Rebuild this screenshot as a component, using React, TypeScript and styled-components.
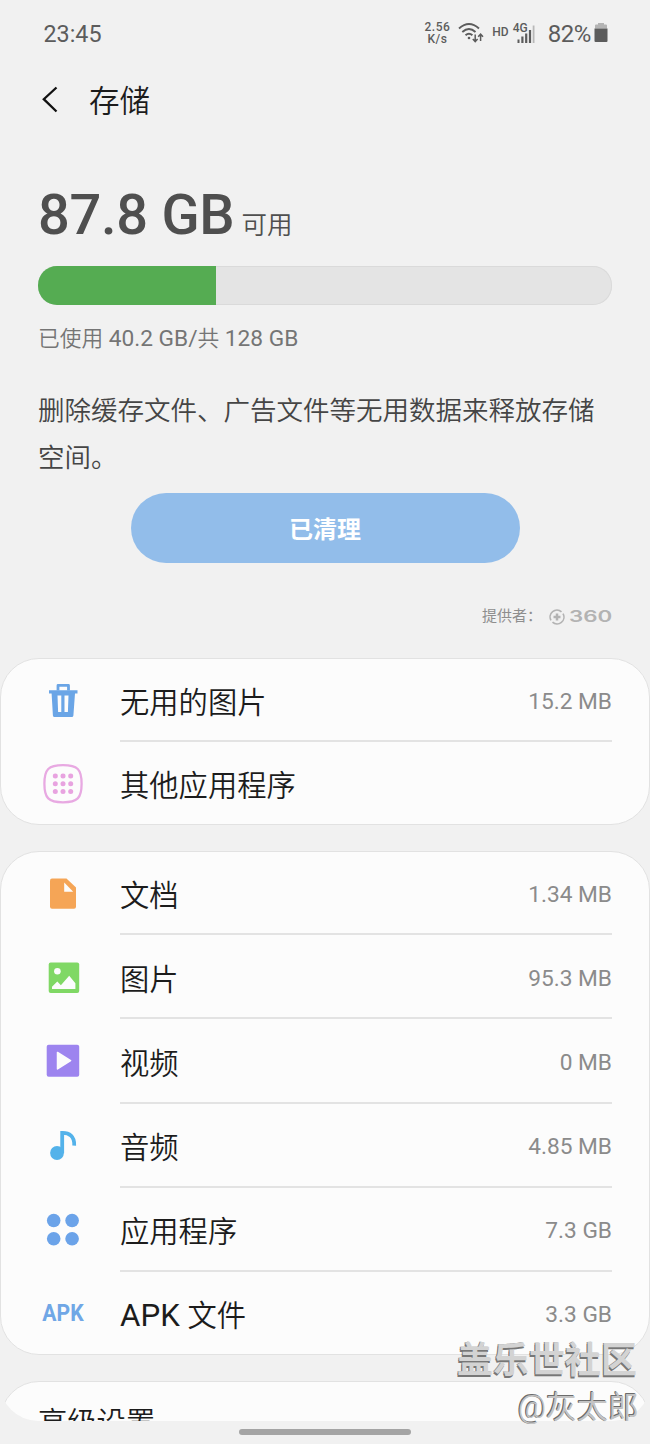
import React from 'react';
import styled, { createGlobalStyle } from 'styled-components';

const GlobalStyle = createGlobalStyle`
  * { box-sizing: border-box; }
  body {
    margin: 0;
    background: #f1f1f1;
    font-family: Roboto, 'Noto Sans CJK SC', sans-serif;
    color: #1c1c1c;
  }
`;

const Screen = styled.div`
  position: relative;
  width: 650px;
  height: 1444px;
  overflow: hidden;
  display: flex;
  flex-direction: column;
  background: #f1f1f1;
`;

const StatusBar = styled.header`
  height: 67px;
  flex: none;
  display: flex;
  align-items: center;
  justify-content: space-between;
  padding: 0 42px 0 43.5px;
  color: #5c5c5c;
`;

const Clock = styled.span`
  font-size: 23.3px;
  line-height: 28px;
`;

const StatusIcons = styled.div`
  display: flex;
  align-items: center;
`;

const Speed = styled.div`
  font-size: 12px;
  font-weight: 500;
  line-height: 11.5px;
  text-align: center;
  margin-right: 8px;
  letter-spacing: 0.5px;
`;

const HdMark = styled.span`
  font-size: 12px;
  font-weight: 500;
  line-height: 14px;
  margin: -3px 4px 0 7px;
`;

const Signal = styled.div`
  position: relative;
  width: 22px;
  height: 22px;
`;

const SignalType = styled.span`
  position: absolute;
  left: 0;
  top: -1px;
  font-size: 12px;
  font-weight: 500;
  line-height: 12px;
`;

const Percent = styled.span`
  font-size: 24px;
  line-height: 28px;
  letter-spacing: -0.4px;
  margin: 0 3px 0 13px;
`;

const TitleBar = styled.div`
  height: 67px;
  flex: none;
  display: flex;
  align-items: center;
  padding: 0 0 2px 41px;
`;

const Title = styled.h1`
  margin: 0 0 0 30px;
  padding-top: 4px;
  font-size: 30.5px;
  line-height: 40px;
  font-weight: 350;
`;

const Summary = styled.section`
  flex: none;
  height: 524px;
  padding: 48px 38px 0;
  display: flex;
  flex-direction: column;
`;

const Capacity = styled.div`
  height: 84px;
  display: flex;
  align-items: baseline;
  color: #4f4f4f;
`;

const FreeAmount = styled.span`
  font-size: 56px;
  line-height: 66px;
  font-weight: 500;
  letter-spacing: -0.3px;
`;

const FreeLabel = styled.span`
  font-size: 25.5px;
  line-height: 34px;
  font-weight: 350;
  margin-left: 7px;
`;

const Meter = styled.div`
  height: 38.5px;
  flex: none;
  border-radius: 19px;
  overflow: hidden;
  background: #e4e4e4;
  box-shadow: inset 0 0 0 1px #dadada;
`;

const MeterFill = styled.div`
  height: 100%;
  background: #55ac52;
`;

const Usage = styled.p`
  margin: 18.5px 0 0;
  font-size: 21.7px;
  line-height: 32px;
  font-weight: 350;
  color: #757575;
`;

const Latin = styled.span<{ $size: number }>`
  font-size: ${(p) => p.$size}px;
  font-weight: 400;
`;

const Description = styled.p`
  margin: 31.5px 0 0;
  font-size: 26.5px;
  line-height: 47px;
  font-weight: 350;
  color: #454545;
`;

const CleanButton = styled.button`
  width: 389px;
  height: 70px;
  flex: none;
  align-self: center;
  margin-top: 12.5px;
  border: 0;
  border-radius: 35px;
  padding: 3px 0 0;
  background: #92bdea;
  color: #fff;
  font: 700 24px/36px Roboto, 'Noto Sans CJK SC', sans-serif;
`;

const Provider = styled.div`
  display: flex;
  align-items: center;
  justify-content: flex-end;
  height: 24px;
  margin-top: 42px;
  font-size: 15px;
  color: #8e8e8e;
`;

const ProviderLabel = styled.span`
  line-height: 20px;
  padding-bottom: 2px;
`;

const Brand = styled.span`
  display: flex;
  align-items: center;
  gap: 4px;
  margin-left: 7px;
  color: #b3b3b3;
`;

const BrandName = styled.span`
  width: 43px;
  font: 600 15.5px/18px Inter, sans-serif;
  transform: scaleX(1.44);
  transform-origin: left center;
`;

const Lists = styled.main`
  height: 762.5px;
  flex: none;
  display: flex;
  flex-direction: column;
  gap: 26px;
  overflow: hidden;
  border-radius: 0 0 38px 38px;
`;

const Card = styled.section<{ $height: number }>`
  height: ${(p) => p.$height}px;
  flex: none;
  display: flex;
  flex-direction: column;
  background: #fcfcfc;
  border: 1px solid #e2e2e2;
  border-radius: 39px;
`;

const Row = styled.div<{ $height: number }>`
  height: ${(p) => p.$height}px;
  flex: none;
  display: flex;
  align-items: stretch;
  padding: 0 37px 0 40px;
`;

const IconSlot = styled.div`
  width: 44px;
  margin-right: 35px;
  display: flex;
  align-items: center;
  justify-content: center;
`;

const RowBody = styled.div<{ $last: boolean }>`
  flex: 1;
  display: flex;
  align-items: center;
  justify-content: space-between;
  padding-top: ${(p) => (p.$last ? 5 : 7)}px;
  border-bottom: ${(p) => (p.$last ? '0' : '2px solid #e3e3e3')};
`;

const Label = styled.span`
  font-size: 29.3px;
  line-height: 40px;
  font-weight: 350;
`;

const Value = styled.span`
  font-size: 22.7px;
  line-height: 30px;
  padding-bottom: 2px;
  color: #8b8b8b;
`;

const ApkMark = styled.span`
  font-size: 23.5px;
  line-height: 28px;
  font-weight: 700;
  color: #70a7e6;
  transform: scaleX(0.9);
  margin-left: -1px;
`;

const SettingsLabel = styled.div`
  padding: 21px 0 0 37px;
  font-size: 29.3px;
  line-height: 40px;
  font-weight: 350;
`;

const HomeBar = styled.div`
  width: 172px;
  height: 6px;
  flex: none;
  margin: 8.5px auto 0;
  border-radius: 3px;
  background: #a4a4a4;
`;

const Watermark = styled.div`
  position: absolute;
  right: 13px;
  top: 1337px;
  display: flex;
  flex-direction: column;
  align-items: flex-end;
`;

const Community = styled.span`
  font-size: 36px;
  line-height: 48px;
  font-weight: 700;
  color: #d3d3d3;
  text-shadow: -1px 2px 0 #777, -1px 0 0 #8c8c8c;
`;

const Author = styled.span`
  font-size: 31px;
  line-height: 46px;
  font-weight: 350;
  margin-right: -2px;
  color: #c4c4c4;
  text-shadow: -1px -1px 0 #6c6c6c, -1px 0 0 #808080;
`;

const Wifi = () => (
  <svg width="27" height="22" viewBox="0 0 27 22" fill="none" stroke="#5c5c5c" strokeWidth="1.9">
    <path d="M1 5.500Q11 -3.500 21 5.500M4.3 9Q11 3 17.5 9M7.5 12.3Q11 9.2 14.4 12.3" />
    <circle cx="11" cy="15" r="1.3" fill="#5c5c5c" stroke="none" />
    <path d="M17.2 11.5V18M14.8 16l2.4 2.6 2.4-2.6M22.6 18V11.5M20.2 13.8l2.4-2.6 2.4 2.6" strokeWidth="1.5" />
  </svg>
);

const SignalBars = () => (
  <svg width="22" height="22" viewBox="0 0 22 22" fill="#5c5c5c">
    <path d="M4.500 16.500h2V20h-2zM8.300 13.500h2.200V20H8.300zM12.100 10.500h2.200V20h-2.200zM15.900 7h2.200v13h-2.200z" />
    <path d="M19.700 2.500h1.800V20h-1.800z" fill="#b8b8b8" />
  </svg>
);

const Battery = () => (
  <svg width="14" height="22" viewBox="0 0 14 22">
    <path d="M4 0h6v1.500h2q1 0 1 1v3H1v-3q0-1 1-1h2z" fill="#b4b4b4" />
    <path d="M.500 5.500h13V18q0 1-1 1h-11q-1 0-1-1z" fill="#5c5c5c" />
  </svg>
);

const BackArrow = () => (
  <svg width="18" height="28" viewBox="0 0 18 28" fill="none" stroke="#111" strokeWidth="2.300">
    <path d="M15.500 1.500L2.800 13.200l12.700 12.300" />
  </svg>
);

const BrandLogo = () => (
  <svg width="16" height="16" viewBox="0 0 16 16" fill="none" stroke="#b3b3b3">
    <path d="M2 11.300A6.800 6.800 0 0 1 12.500 2.900M14 4.700A6.800 6.800 0 0 1 3.500 13.100" strokeWidth="1.600" />
    <path d="M8 4.500v7M4.500 8h7" strokeWidth="2.500" />
  </svg>
);

const RowIcon = ({ children }: { children: React.ReactNode }) => (
  <svg width="44" height="44" viewBox="0 0 44 44">{children}</svg>
);

const TrashIcon = () => (
  <RowIcon>
    <path d="M17 11.500V6.400h10.500v5.100" fill="none" stroke="#6aa5e6" strokeWidth="2.800" strokeLinejoin="round" />
    <path d="M8 11.300h28.500v3.200H34l-1.600 22q-.1 1.600-1.700 1.600H13.600q-1.600 0-1.700-1.600L10.600 14.500H8z" fill="#6aa5e6" />
    <path d="M16.500 16.500h3.800V33h-3.200zM23.500 16.500h4L26.900 33h-3.400z" fill="#fcfcfc" />
  </RowIcon>
);

const grid = [14.3, 22, 29.7];

const OtherAppsIcon = () => (
  <RowIcon>
    <g transform="translate(0 .7)">
      <path
        d="M22 3.400C36.500 3.400 40.600 7.500 40.600 22S36.500 40.600 22 40.600 3.400 36.500 3.400 22 7.500 3.400 22 3.400z"
        fill="none"
        stroke="#e8a9e2"
        strokeWidth="2.300"
      />
      {grid.map((y) => grid.map((x) => <circle key={`${x}-${y}`} cx={x} cy={y} r="2.500" fill="#e8a3e0" />))}
    </g>
  </RowIcon>
);

const DocumentIcon = () => (
  <RowIcon>
    <path d="M11 6.500h14.500L35 15.500v19.300q0 2-2 2H11q-2 0-2-2V8.500q0-2 2-2z" fill="#f5a556" />
    <path d="M23.200 10.500v9.300h9z" fill="#fcfcfc" />
  </RowIcon>
);

const PictureIcon = () => (
  <RowIcon>
    <rect x="7.700" y="7.500" width="30.500" height="30.500" rx="2" fill="#80d865" />
    <circle cx="16.400" cy="16.300" r="3.300" fill="#fcfcfc" />
    <path d="M11 34v-2.200l5.300-5.200 3.600 3.600 8.300-9.400 6.200 7.500V34z" fill="#fcfcfc" />
  </RowIcon>
);

const VideoIcon = () => (
  <RowIcon>
    <rect x="5.700" y="5.700" width="32.500" height="32" rx="2" fill="#9d84ef" />
    <path d="M16.500 13.500v16.400L29.600 21.700z" fill="#fcfcfc" stroke="#fcfcfc" strokeWidth="1.500" strokeLinejoin="round" />
  </RowIcon>
);

const AudioIcon = () => (
  <RowIcon>
    <circle cx="16" cy="29" r="6.900" fill="#53b2ea" />
    <path d="M21.200 29.200V8.800C28 8.600 33.800 12.200 33.200 21.700" fill="none" stroke="#53b2ea" strokeWidth="3.800" />
  </RowIcon>
);

const AppsIcon = () => (
  <RowIcon>
    {[12.5, 30.8].map((y) => [12.7, 31.1].map((x) => <circle key={`${x}-${y}`} cx={x} cy={y} r="6.800" fill="#6ba3e9" />))}
  </RowIcon>
);

type Item = { id: string; icon: React.ReactNode; label: React.ReactNode; value?: string };

const cleanup: Item[] = [
  { id: 'junk', icon: <TrashIcon />, label: '无用的图片', value: '15.2 MB' },
  { id: 'other', icon: <OtherAppsIcon />, label: '其他应用程序' },
];

const categories: Item[] = [
  { id: 'docs', icon: <DocumentIcon />, label: '文档', value: '1.34 MB' },
  { id: 'images', icon: <PictureIcon />, label: '图片', value: '95.3 MB' },
  { id: 'video', icon: <VideoIcon />, label: '视频', value: '0 MB' },
  { id: 'audio', icon: <AudioIcon />, label: '音频', value: '4.85 MB' },
  { id: 'apps', icon: <AppsIcon />, label: '应用程序', value: '7.3 GB' },
  {
    id: 'apk',
    icon: <ApkMark>APK</ApkMark>,
    label: (
      <>
        <Latin $size={31.3}>APK </Latin>文件
      </>
    ),
    value: '3.3 GB',
  },
];

const ItemCard = ({ items, height }: { items: Item[]; height: number }) => (
  <Card $height={height}>
    {items.map((item, i) => {
      const last = i === items.length - 1;
      return (
        <Row key={item.id} $height={i === 0 ? 83 : last ? 82.5 : 84.25}>
          <IconSlot>{item.icon}</IconSlot>
          <RowBody $last={last}>
            <Label>{item.label}</Label>
            {item.value && <Value>{item.value}</Value>}
          </RowBody>
        </Row>
      );
    })}
  </Card>
);

export default function App() {
  return (
    <>
      <GlobalStyle />
      <Screen>
        <StatusBar>
          <Clock>23:45</Clock>
          <StatusIcons>
            <Speed>
              2.56
              <br />
              K/s
            </Speed>
            <Wifi />
            <HdMark>HD</HdMark>
            <Signal>
              <SignalBars />
              <SignalType>4G</SignalType>
            </Signal>
            <Percent>82%</Percent>
            <Battery />
          </StatusIcons>
        </StatusBar>
        <TitleBar>
          <BackArrow />
          <Title>存储</Title>
        </TitleBar>
        <Summary>
          <Capacity>
            <FreeAmount>87.8 GB</FreeAmount>
            <FreeLabel>可用</FreeLabel>
          </Capacity>
          <Meter>
            <MeterFill style={{ width: '31%' }} />
          </Meter>
          <Usage>
            已使用<Latin $size={22.7}> 40.2 GB/</Latin>共<Latin $size={22.7}> 128 GB</Latin>
          </Usage>
          <Description>删除缓存文件、广告文件等无用数据来释放存储空间。</Description>
          <CleanButton>已清理</CleanButton>
          <Provider>
            <ProviderLabel>提供者：</ProviderLabel>
            <Brand>
              <BrandLogo />
              <BrandName>360</BrandName>
            </Brand>
          </Provider>
        </Summary>
        <Lists>
          <ItemCard items={cleanup} height={167} />
          <ItemCard items={categories} height={504} />
          <Card $height={120}>
            <SettingsLabel>高级设置</SettingsLabel>
          </Card>
        </Lists>
        <HomeBar />
        <Watermark>
          <Community>盖乐世社区</Community>
          <Author>@灰太郎</Author>
        </Watermark>
      </Screen>
    </>
  );
}
